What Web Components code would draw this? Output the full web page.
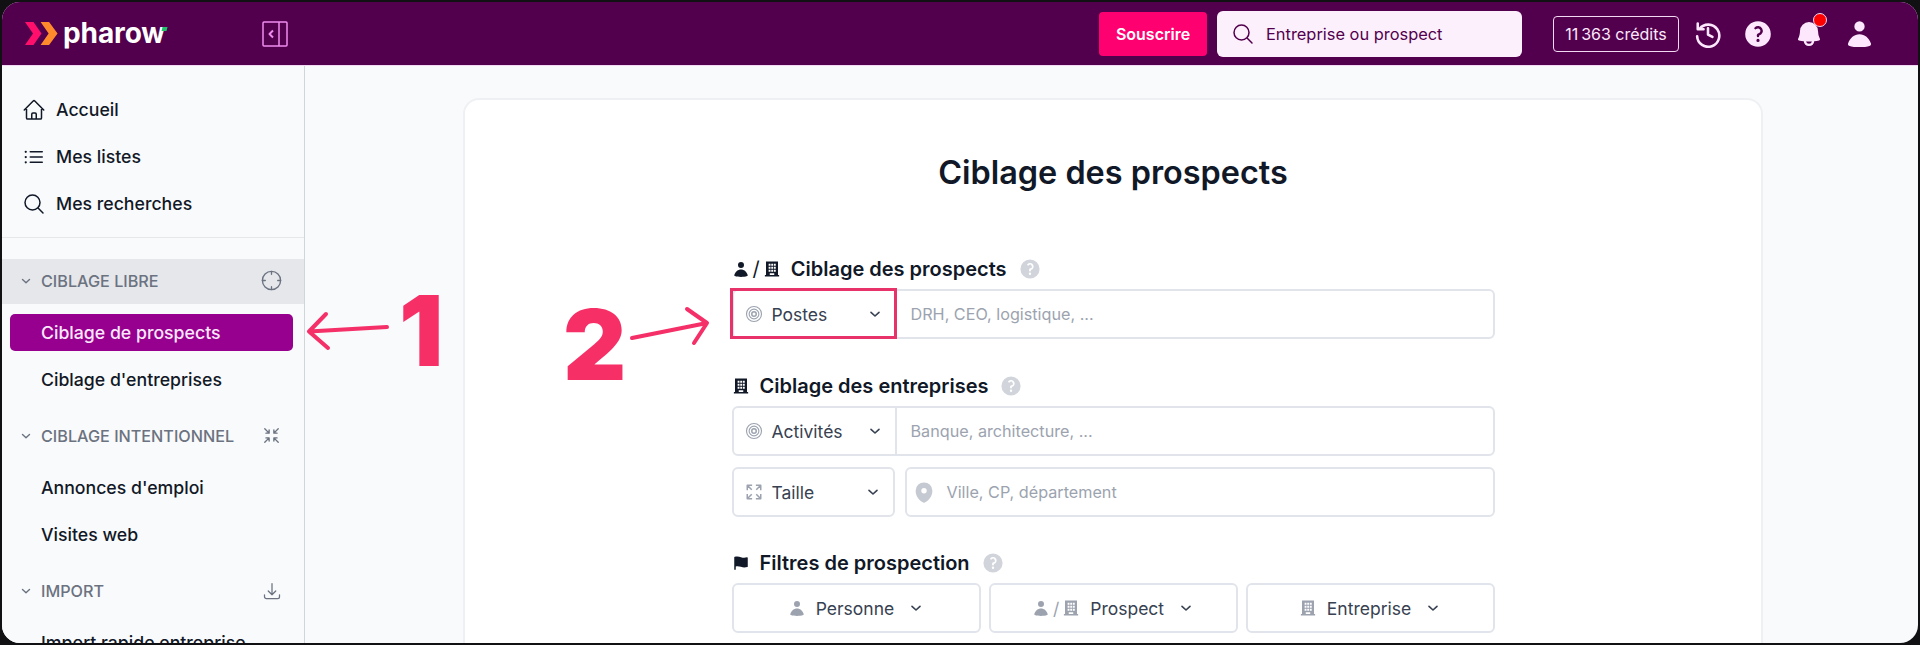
<!DOCTYPE html>
<html lang="fr">
<head>
<meta charset="utf-8">
<title>Pharow</title>
<style>
  html, body { margin: 0; height: 100%; background: #111114; overflow: hidden; }
  body { font-family: Inter, "Liberation Sans", sans-serif; }
</style>
</head>
<body>
<app-shell>
  <top-bar slot="top"></top-bar>
  <side-nav slot="side">
    <nav-item icon="home">Accueil</nav-item>
    <nav-item icon="list">Mes listes</nav-item>
    <nav-item icon="search">Mes recherches</nav-item>
    <nav-rule></nav-rule>
    <nav-section icon="crosshair" size="23" active>CIBLAGE LIBRE</nav-section>
    <nav-link active>Ciblage de prospects</nav-link>
    <nav-link>Ciblage d'entreprises</nav-link>
    <nav-section icon="compress" size="19">CIBLAGE INTENTIONNEL</nav-section>
    <nav-link>Annonces d'emploi</nav-link>
    <nav-link>Visites web</nav-link>
    <nav-section icon="tray" size="20">IMPORT</nav-section>
    <nav-link>Import rapide entreprise</nav-link>
  </side-nav>
  <target-card slot="main" heading="Ciblage des prospects">
    <field-group icons="user,/,building" heading="Ciblage des prospects" style="height:85px">
      <joined-input placeholder="DRH, CEO, logistique, ...">
        <select-box icon="target" highlight>Postes</select-box>
      </joined-input>
    </field-group>
    <field-group icons="building" heading="Ciblage des entreprises" style="margin-top:32px">
      <joined-input placeholder="Banque, architecture, ...">
        <select-box icon="target">Activités</select-box>
      </joined-input>
      <div style="display:flex;gap:10px;margin-top:11px">
        <select-box icon="expand" boxed>Taille</select-box>
        <joined-input placeholder="Ville, CP, département" pin style="flex:1"></joined-input>
      </div>
    </field-group>
    <field-group icons="flag" heading="Filtres de prospection" style="margin-top:31px">
      <div style="display:flex;gap:8px">
        <filter-button icons="user">Personne</filter-button>
        <filter-button icons="user,/,building">Prospect</filter-button>
        <filter-button icons="building">Entreprise</filter-button>
      </div>
    </field-group>
  </target-card>
  <call-out slot="over" number="1" style="left:399px;top:296px"></call-out>
  <call-out slot="over" number="2" style="left:563px;top:310px"></call-out>
  <call-arrows slot="over"></call-arrows>
</app-shell>

<script>
const ICONS = {
  home: `<path fill="none" stroke="currentColor" stroke-width="1.5" stroke-linecap="round" stroke-linejoin="round" d="m2.25 12 8.954-8.955c.44-.439 1.152-.439 1.591 0L21.75 12M4.5 9.75v10.125c0 .621.504 1.125 1.125 1.125H9.75v-4.875c0-.621.504-1.125 1.125-1.125h2.25c.621 0 1.125.504 1.125 1.125V21h4.125c.621 0 1.125-.504 1.125-1.125V9.75M8.25 21h8.25"/>`,
  list: `<path fill="none" stroke="currentColor" stroke-width="1.5" stroke-linecap="round" stroke-linejoin="round" d="M8.25 6.75h12M8.25 12h12m-12 5.25h12M3.75 6.75h.007v.008H3.75V6.75Zm.375 0a.375.375 0 1 1-.75 0 .375.375 0 0 1 .75 0ZM3.75 12h.007v.008H3.75V12Zm.375 0a.375.375 0 1 1-.75 0 .375.375 0 0 1 .75 0Zm-.375 5.25h.007v.008H3.75v-.008Zm.375 0a.375.375 0 1 1-.75 0 .375.375 0 0 1 .75 0Z"/>`,
  search: `<path fill="none" stroke="currentColor" stroke-width="1.5" stroke-linecap="round" stroke-linejoin="round" d="m21 21-5.197-5.197m0 0A7.5 7.5 0 1 0 5.196 5.196a7.5 7.5 0 0 0 10.607 10.607Z"/>`,
  chevron: `<path fill="none" stroke="currentColor" stroke-width="2.4" stroke-linecap="round" stroke-linejoin="round" d="m6 9.5 6 5.5 6-5.5"/>`,
  crosshair: `<g fill="none" stroke="currentColor" stroke-width="1.4" stroke-linecap="round"><circle cx="12" cy="12" r="9.5"/><path d="M12 2.5v3M12 18.5v3M2.5 12h3M18.5 12h3"/></g>`,
  compress: `<path fill="none" stroke="currentColor" stroke-width="1.7" stroke-linecap="round" stroke-linejoin="round" d="M3.5 3.5 9 9M9 5v4H5M20.5 3.5 15 9M15 5v4h4M3.5 20.5 9 15M9 19v-4H5M20.5 20.5 15 15M15 19v-4h4"/>`,
  tray: `<path fill="none" stroke="currentColor" stroke-width="1.5" stroke-linecap="round" stroke-linejoin="round" d="M3 16.5v2.25A2.25 2.25 0 0 0 5.25 21h13.5A2.25 2.25 0 0 0 21 18.75V16.5M16.5 12 12 16.5m0 0L7.5 12m4.5 4.5V3"/>`,
  target: `<g fill="none" stroke="currentColor"><circle cx="12" cy="12" r="10" stroke-width="1.5"/><circle cx="12" cy="12" r="6.5" stroke-width="1.5"/><circle cx="12" cy="12" r="3" stroke-width="2"/></g>`,
  expand: `<path fill="none" stroke="currentColor" stroke-width="2" stroke-linejoin="round" d="M9.5 3H3v6.5M3 3l6 6M14.5 3H21v6.5M21 3l-6 6M9.5 21H3v-6.5M3 21l6-6M14.5 21H21v-6.5M21 21l-6-6"/>`,
  user: `<path fill="currentColor" d="M12 10.5a4 4 0 1 0 0-8 4 4 0 0 0 0 8ZM3.2 19.6c-.3.8 0 1.5.6 1.8 2.4.9 5.2 1.1 8.2 1.1s5.800-.2 8.200-1.100c.6-.3.9-1 .6-1.800C19.500 15.500 16 12.500 12 12.500s-7.500 3-8.800 7.100Z"/>`,
  building: `<path fill="currentColor" fill-rule="evenodd" d="M4 2h16v18h1.500v2h-19v-2H4V2Zm3.500 3v2.500h2.500V5H7.500Zm3.500 0h2.500v2.500H11V5Zm3.500 0v2.500H17V5h-2.500ZM7.500 9v2.500h2.500V9H7.500Zm3.500 0h2.500v2.500H11V9Zm3.500 0v2.500H17V9h-2.500ZM7.500 13v2.500h2.500V13H7.500Zm3.500 0h2.500v2.500H11V13Zm3.500 0v2.500H17V13h-2.500ZM9 17.500V20h6v-2.500H9Z"/>`,
  flag: `<path fill="currentColor" d="M3 4.500c0-.4.300-.7.700-.8 2.800-.7 5.300-.6 8.300.5 2.800 1 5.200 1 8 .2.600-.2 1 .2 1 .8v11.300c0 .4-.2.700-.6.800-3 .9-5.600.8-8.600-.2-2.600-.9-4.800-1-6.800-.5V21H3V4.500Z"/>`,
  help: `<path fill="currentColor" fill-rule="evenodd" d="M18 10a8 8 0 1 1-16 0 8 8 0 0 1 16 0ZM8.940 6.940a.75.75 0 1 1-1.061-1.061 3 3 0 1 1 2.871 5.026v.345a.75.75 0 0 1-1.500 0v-.500c0-.720.570-1.172 1.081-1.287A1.500 1.500 0 1 0 8.940 6.940ZM10 15a1 1 0 1 0 0-2 1 1 0 0 0 0 2Z"/>`,
  pin: `<path fill="currentColor" fill-rule="evenodd" d="m9.690 18.933.003.001C9.890 19.020 10 19 10 19s.110.020.308-.066l.002-.001.006-.003.018-.008a5.741 5.741 0 0 0 .281-.140c.186-.096.446-.240.757-.433.620-.384 1.445-.966 2.274-1.765C15.302 14.988 17 12.493 17 9A7 7 0 1 0 3 9c0 3.492 1.698 5.988 3.355 7.584a13.731 13.731 0 0 0 2.273 1.765 11.842 11.842 0 0 0 .976.544l.062.029.018.008.006.003ZM10 11.250a2.250 2.250 0 1 0 0-4.500 2.250 2.250 0 0 0 0 4.500Z"/>`,
  bell: `<path fill="currentColor" fill-rule="evenodd" d="M10 2a6 6 0 0 0-6 6c0 1.887-.454 3.665-1.257 5.234a.75.75 0 0 0 .515 1.076 32.910 32.910 0 0 0 3.256.508 3.500 3.500 0 0 0 6.972 0 32.903 32.903 0 0 0 3.256-.508.75.75 0 0 0 .515-1.076A11.448 11.448 0 0 1 16 8a6 6 0 0 0-6-6ZM8.050 14.943a33.540 33.540 0 0 0 3.900 0 2 2 0 0 1-3.900 0Z"/>`,
  history: `<g fill="none" stroke="currentColor" stroke-width="2.200" stroke-linecap="round" stroke-linejoin="round"><path d="M4.800 7.500A9.500 9.500 0 1 1 2.700 14"/><path d="M3.200 3v5h5"/><path d="M12 7v5.500l3.800 2"/></g>`
};
const VIEWBOX = { help: "0 0 20 20", pin: "0 0 20 20", bell: "0 0 20 20" };

function icon(name, size, extra = "") {
  return `<svg width="${size}" height="${size}" viewBox="${VIEWBOX[name] || "0 0 24 24"}" style="display:block;flex:none;${extra}">${ICONS[name]}</svg>`;
}

function define(tag, render) {
  customElements.define(tag, class extends HTMLElement {
    connectedCallback() {
      if (this.shadowRoot) return;
      this.attachShadow({ mode: "open" });
      this.shadowRoot.innerHTML = render(this);
    }
  });
}

define("app-shell", () => `
  <style>
    :host { display: block; position: absolute; left: 2px; top: 2px; right: 2px; bottom: 2px; border-radius: 18px; overflow: hidden; background: #f9fafb; }
    .body { display: flex; height: calc(100% - 64px); }
  </style>
  <slot name="top"></slot>
  <div class="body"><slot name="side"></slot><slot name="main"></slot></div>
  <slot name="over"></slot>
`);

define("top-bar", () => `
  <style>
    :host { display: flex; align-items: center; height: 64px; box-sizing: border-box; background: #52004d; border-bottom: 1px solid #f3d9f3; padding-left: 23px; color: #fce7fc; }
    .logo { display: flex; align-items: center; width: 237px; }
    .word { position: relative; font: 700 28px/1 Inter, sans-serif; color: #fff; margin-left: 5px; top: -1px; letter-spacing: -.1px; }
    .tick { position: absolute; right: -2px; top: 8px; width: 5px; height: 4px; background: #1fc16b; transform: skewX(-15deg); }
    .toggle { display: block; }
    .right { margin-left: auto; display: flex; align-items: center; }
    .sub { box-sizing: border-box; width: 108px; height: 44px; display: flex; align-items: center; justify-content: center; background: #ff0070; border-radius: 4px; color: #fff; font: 600 16px Inter, sans-serif; }
    .search { box-sizing: border-box; width: 305px; height: 46px; margin-left: 10px; display: flex; align-items: center; gap: 11px; padding-left: 14px; background: #fdf0fd; border-radius: 6px; color: #52004d; font: 400 16.4px Inter, sans-serif; }
    .credits { box-sizing: border-box; width: 126px; height: 36px; margin-left: 31px; display: flex; align-items: center; justify-content: center; border: 1px solid #f3d9f3; border-radius: 4px; font: 400 16px Inter, sans-serif; white-space: nowrap; }
    .tools { display: flex; align-items: center; margin-left: 15px; margin-right: 43px; gap: 20px; }
    .bell { position: relative; }
    .dot { position: absolute; right: -3px; top: -6px; width: 12px; height: 12px; background: #f00; border-radius: 50%; border: 1px solid #f3d9f3; }
  </style>
  <div class="logo">
    <svg width="33" height="23" viewBox="0 0 37 23" preserveAspectRatio="none">
      <path fill="#ff0f6b" d="M0 0h9.500l9 11.500-9 11.500H0l9-11.500z"/>
      <path fill="#ff8a2b" d="M17.500 0H27l9.500 11.500L27 23h-9.500l9-11.500z"/>
    </svg>
    <span class="word">pharow<i class="tick"></i></span>
  </div>
  <svg class="toggle" width="26" height="26" viewBox="0 0 26 26" fill="none" stroke="#f08cf0" stroke-width="1.500" stroke-linejoin="round">
    <rect x="1" y="1" width="24" height="24" rx="1"/><path d="M17 1v24"/><path stroke-width="2" d="M11 9.500 7.500 13l3.500 3.500"/>
  </svg>
  <div class="right">
    <div class="sub">Souscrire</div>
    <div class="search">${icon("search", 24)}<span>Entreprise ou prospect</span></div>
    <div class="credits">11&#8201;363 crédits</div>
    <div class="tools">
      ${icon("history", 28)}
      ${icon("help", 32)}
      <div class="bell">${icon("bell", 30)}<i class="dot"></i></div>
      ${icon("user", 31)}
    </div>
  </div>
`);

define("side-nav", () => `
  <style>
    :host { display: block; box-sizing: border-box; flex: none; width: 303px; padding-top: 20px; background: #f9fafb; border-right: 1px solid #d1d5db; overflow: hidden; }
  </style>
  <slot></slot>
`);

define("nav-item", el => `
  <style>
    :host { display: flex; align-items: center; height: 47px; padding-left: 20px; gap: 10px; color: #111827; font: 500 17.7px Inter, sans-serif; }
  </style>
  ${icon(el.getAttribute("icon"), 24)}<slot></slot>
`);

define("nav-rule", () => `
  <style>:host { display: block; height: 1px; background: #e5e7eb; margin: 10px 0 21px; }</style>
`);

define("nav-section", el => `
  <style>
    :host { display: flex; align-items: center; height: 45px; box-sizing: border-box; padding: 0 21px 2px 17px; gap: 8px; color: #6b7280; font: 500 16.2px Inter, sans-serif; margin-top: 16px; }
    :host([active]) { background: #e5e7eb; margin-top: 0; }
    .label { flex: 1; }
    .end { display: flex; justify-content: center; width: 23px; }
  </style>
  ${icon("chevron", 14)}<span class="label"><slot></slot></span>
  <span class="end">${icon(el.getAttribute("icon"), el.getAttribute("size"))}</span>
`);

define("nav-link", () => `
  <style>
    :host { display: flex; align-items: center; height: 37px; margin: 10px 11px 0 8px; padding-left: 31px; border-radius: 5px; color: #111827; font: 500 17.7px Inter, sans-serif; white-space: nowrap; }
    :host([active]) { background: #97008f; color: #fbe8fb; }
  </style>
  <slot></slot>
`);

define("target-card", el => `
  <style>
    :host { display: flex; flex: 1; min-width: 0; padding: 32px 155px 0 158px; }
    .card { flex: 1; display: flex; flex-direction: column; align-items: center; background: #fff; border: 2px solid #eef0f3; border-bottom: 0; border-radius: 16px 16px 0 0; }
    h1 { margin: 54px 0 0; font: 600 32.4px/38px Inter, sans-serif; color: #111827; }
    .form { width: 763px; margin-top: 62px; }
  </style>
  <div class="card">
    <h1>${el.getAttribute("heading")}</h1>
    <div class="form"><slot></slot></div>
  </div>
`);

function iconRun(list, size) {
  return list.split(",").map(n => n === "/"
    ? `<span style="font-weight:400;margin:0 3px">/</span>`
    : icon(n, size)).join("");
}

define("field-group", el => `
  <style>
    :host { display: block; }
    .head { display: flex; align-items: center; height: 30px; margin-bottom: 5px; color: #111827; font: 600 20px Inter, sans-serif; }
    .icons { display: flex; align-items: center; margin: 0 10px 0 0; }
  </style>
  <div class="head">
    <span class="icons">${iconRun(el.getAttribute("icons"), 18)}</span>
    <span>${el.getAttribute("heading")}</span>
    ${icon("help", 24, "margin-left:11px;color:#d1d5db")}
  </div>
  <slot></slot>
`);

define("joined-input", el => `
  <style>
    :host { display: flex; height: 50px; box-sizing: border-box; background: #fff; border: 2px solid #e1e4ea; border-radius: 6px; align-items: center; font: 400 16.2px Inter, sans-serif; color: #9ca3af; }
    .ph { padding-left: 14px; display: flex; align-items: center; gap: 11px; white-space: nowrap; }
    :host([pin]) .ph { padding-left: 5px; }
  </style>
  <slot></slot>
  <div class="ph">${el.hasAttribute("pin") ? icon("pin", 24, "color:#c5cad2") : ""}${el.getAttribute("placeholder")}</div>
`);

define("select-box", el => `
  <style>
    :host { display: flex; position: relative; align-items: center; box-sizing: content-box; width: 161px; height: 46px; border-right: 2px solid #e1e4ea; color: #374151; font: 400 17.5px Inter, sans-serif; }
    :host([boxed]) { height: 46px; width: 159px; border: 2px solid #e1e4ea; border-radius: 6px; background: #fff; flex: none; }
    .ic { margin: 0 9px 0 11px; color: #9ca3af; }
    .chev { position: absolute; right: 12px; top: 50%; margin-top: -8px; color: #374151; }
    :host([highlight])::after { content: ""; position: absolute; left: -4px; top: -3px; right: -2px; bottom: -2px; border: 3px solid #e8336a; }
  </style>
  <span class="ic">${icon(el.getAttribute("icon"), 18)}</span>
  <slot></slot>
  <span class="chev">${icon("chevron", 16)}</span>
`);

define("filter-button", el => `
  <style>
    :host { display: flex; flex: 1; align-items: center; justify-content: center; height: 50px; box-sizing: border-box; border: 2px solid #e1e4ea; border-radius: 6px; background: #fff; color: #374151; font: 400 17.5px Inter, sans-serif; }
    .icons { display: flex; align-items: center; color: #9ca3af; margin-right: 10px; }
    .chev { margin-left: 14px; }
  </style>
  <span class="icons">${iconRun(el.getAttribute("icons"), 18)}</span>
  <slot></slot>
  <span class="chev">${icon("chevron", 16)}</span>
`);

define("call-out", el => `
  <style>
    :host { position: absolute; margin: -16px 0 0 -2px; color: #f72f67; font: 900 98px/1 Inter, sans-serif; }
  </style>
  ${el.getAttribute("number")}
`);

define("call-arrows", () => `
  <style>:host { position: absolute; left: -2px; top: -2px; width: 1920px; height: 645px; pointer-events: none; }</style>
  <svg width="1920" height="645" fill="none" stroke="#f52f68" stroke-width="4" stroke-linecap="round" stroke-linejoin="round">
    <path d="M387 327 309 331.500M326 314 309 331.500 328 348"/>
    <path d="M632 338 707 323M687 309 707 323 694 343"/>
  </svg>
`);
</script>
</body>
</html>
